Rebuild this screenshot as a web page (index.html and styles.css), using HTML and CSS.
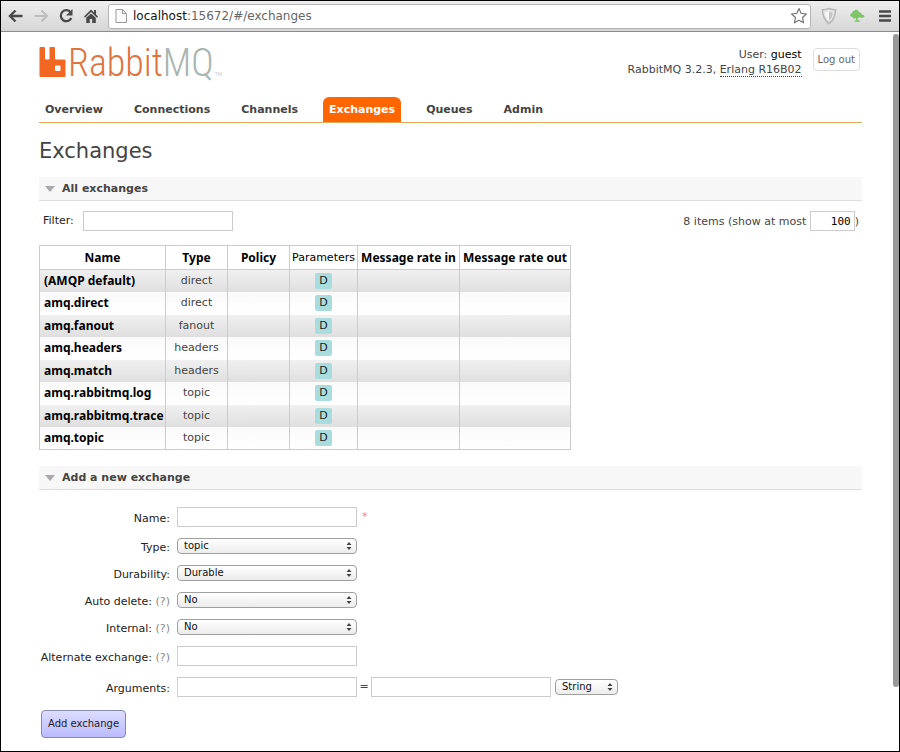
FILE: index.html
```html
<!DOCTYPE html>
<html lang="en">
<head>
<meta charset="utf-8">
<title>RabbitMQ Management</title>
<link rel="stylesheet" href="styles.css">
</head>
<body>
<div class="window">
  <div class="toolbar">
    <button class="tool" type="button" aria-label="Back"><svg width="16" height="16" viewBox="0 0 16 16"><path d="M7.500 2.500 2 8l5.500 5.500M2.500 8H14.500" fill="none" stroke="#4a4a4a" stroke-width="2.400"/></svg></button>
    <button class="tool" type="button" aria-label="Forward"><svg width="16" height="16" viewBox="0 0 16 16"><path d="M8.500 2.500 14 8l-5.500 5.500M13.500 8H1.500" fill="none" stroke="#bdbdbd" stroke-width="2"/></svg></button>
    <button class="tool" type="button" aria-label="Reload"><svg width="16" height="16" viewBox="0 0 16 16"><path d="M12.800 4.500A5.500 5.500 0 1 0 13.300 10" fill="none" stroke="#4a4a4a" stroke-width="2.300"/><path d="M14.500 1v6.500H8z" fill="#4a4a4a"/></svg></button>
    <button class="tool" type="button" aria-label="Home"><svg width="16" height="16" viewBox="0 0 16 16"><path d="M8 1.500 1 8.500l1 1.200 6-5.700 6 5.700 1-1.200-2-2V2h-2v2.500zM3.200 9.800V15h3.600v-4h2.400v4h3.600V9.800L8 5.500z" fill="#4a4a4a"/></svg></button>
    <div class="address">
      <svg width="12" height="14" viewBox="0 0 12 14"><path d="M1 .5h6.500l4 4v9H1zM7.500.5v4h4" fill="#fafafa" stroke="#999"/></svg>
      <span class="url"><span class="host">localhost</span>:15672/#/exchanges</span>
      <svg width="18" height="18" viewBox="0 0 18 18"><path d="m9 1.500 2.200 4.900 5.300.6-4 3.500 1.100 5.300L9 13.200l-4.600 2.600 1.100-5.300-4-3.500 5.300-.6z" fill="#fff" stroke="#777" stroke-width="1.200" stroke-linejoin="round"/></svg>
    </div>
    <svg class="ext" width="16" height="18" viewBox="0 0 16 18"><path d="M8 1.500C5.500 2.500 3.500 2.800 1.500 2.800c0 7 2 10.700 6.500 13.700 4.500-3 6.500-6.700 6.500-13.700-2 0-4-.3-6.500-1.300z" fill="#e6e6e6" stroke="#b8b8b8" stroke-width="1.600"/><path d="M8 4.500c-1.500.6-2.500.8-3.600.9.200 3.900 1.200 6.100 3.600 8z" fill="#fafafa"/><path d="M8 4.500c1.500.6 2.500.8 3.600.9-.2 3.900-1.200 6.100-3.600 8z" fill="#c4c4c4"/></svg>
    <svg class="ext" width="16" height="16" viewBox="0 0 16 16"><path d="M5.500 2.500 7 1.500l2 1 1.500 2 1.500.2.800 1.800 2 .7.700 1.500-1.500 1-2 .1-1.500-.6-1.800 1-.4 1.300 2.500 1.300.2 1H5l.5-1 1.700-.6-.5-2-2 .3L2.500 8.500l-1.500-.6.3-1.600L3 5l.7-1.600z" fill="#7fc466"/></svg>
    <button class="tool menu" type="button" aria-label="Menu"><svg width="14" height="14" viewBox="0 0 14 14"><path d="M1 2.500h12M1 7h12M1 11.500h12" stroke="#4a4a4a" stroke-width="2.600"/></svg></button>
  </div>

  <div class="page">
    <header class="masthead">
      <a class="logo" href="#/" aria-label="RabbitMQ">
        <svg width="27" height="30" viewBox="0 0 27 30"><path d="M1.500 0H5q1 0 1 1v10.500q0 1 1 1h2.500q1 0 1-1V1q0-1 1-1H15q1 0 1 1v10.500q0 1 1 1h8.500q1 0 1 1V29q0 1-1 1h-24Q.5 30 .5 29V1q0-1 1-1zM17 18.500q-1 0-1 1V23q0 1 1 1h3.500q1 0 1-1v-3.500q0-1-1-1z" fill="#f26722" fill-rule="evenodd"/></svg>
        <span class="wordmark">Rabbit<span class="mq">MQ</span></span><span class="tm">TM</span>
      </a>
      <div class="account">
        <div class="who">
          <div>User: <b class="user">guest</b></div>
          <div>RabbitMQ 3.2.3, <abbr class="erlang">Erlang R16B02</abbr></div>
        </div>
        <button class="logout" type="button">Log out</button>
      </div>
    </header>

    <nav class="tabs">
      <a href="#/">Overview</a>
      <a href="#/connections">Connections</a>
      <a href="#/channels">Channels</a>
      <a href="#/exchanges" class="selected">Exchanges</a>
      <a href="#/queues">Queues</a>
      <a href="#/users">Admin</a>
    </nav>

    <main>
      <h1>Exchanges</h1>

      <h2>All exchanges</h2>
      <div class="filter">
        <label for="filter">Filter:</label>
        <input id="filter" class="filter-box" type="text">
        <span class="count"><label for="most">8 items (show at most</label> <input id="most" class="most" type="text" value="100">)</span>
      </div>

      <table>
        <colgroup><col class="c-name"><col class="c-type"><col class="c-type"><col class="c-param"><col class="c-in"><col class="c-out"></colgroup>
        <thead><tr><th>Name</th><th>Type</th><th>Policy</th><th class="plain">Parameters</th><th>Message rate in</th><th>Message rate out</th></tr></thead>
        <tbody>
          <tr><td><a href="#/exchanges/default">(AMQP default)</a></td><td>direct</td><td></td><td><abbr>D</abbr></td><td></td><td></td></tr>
          <tr><td><a href="#/exchanges/direct">amq.direct</a></td><td>direct</td><td></td><td><abbr>D</abbr></td><td></td><td></td></tr>
          <tr><td><a href="#/exchanges/fanout">amq.fanout</a></td><td>fanout</td><td></td><td><abbr>D</abbr></td><td></td><td></td></tr>
          <tr><td><a href="#/exchanges/headers">amq.headers</a></td><td>headers</td><td></td><td><abbr>D</abbr></td><td></td><td></td></tr>
          <tr><td><a href="#/exchanges/match">amq.match</a></td><td>headers</td><td></td><td><abbr>D</abbr></td><td></td><td></td></tr>
          <tr><td><a href="#/exchanges/log">amq.rabbitmq.log</a></td><td>topic</td><td></td><td><abbr>D</abbr></td><td></td><td></td></tr>
          <tr><td><a href="#/exchanges/trace">amq.rabbitmq.trace</a></td><td>topic</td><td></td><td><abbr>D</abbr></td><td></td><td></td></tr>
          <tr><td><a href="#/exchanges/topic">amq.topic</a></td><td>topic</td><td></td><td><abbr>D</abbr></td><td></td><td></td></tr>
        </tbody>
      </table>

      <h2>Add a new exchange</h2>
      <form>
        <div class="fields">
          <label for="name">Name:</label>
          <div class="field"><input id="name" type="text"><span class="mand">*</span></div>
          <label for="type">Type:</label>
          <div class="field"><span class="pick"><select id="type"><option>topic</option></select><svg width="6" height="8" viewBox="0 0 6 8"><path d="M3 0l2.500 3h-5zM3 8l2.500-3h-5z" fill="#444"/></svg></span></div>
          <label for="durable">Durability:</label>
          <div class="field"><span class="pick"><select id="durable"><option>Durable</option></select><svg width="6" height="8" viewBox="0 0 6 8"><path d="M3 0l2.500 3h-5zM3 8l2.500-3h-5z" fill="#444"/></svg></span></div>
          <label for="auto">Auto delete: <span class="help">(?)</span></label>
          <div class="field"><span class="pick"><select id="auto"><option>No</option></select><svg width="6" height="8" viewBox="0 0 6 8"><path d="M3 0l2.500 3h-5zM3 8l2.500-3h-5z" fill="#444"/></svg></span></div>
          <label for="internal">Internal: <span class="help">(?)</span></label>
          <div class="field"><span class="pick"><select id="internal"><option>No</option></select><svg width="6" height="8" viewBox="0 0 6 8"><path d="M3 0l2.500 3h-5zM3 8l2.500-3h-5z" fill="#444"/></svg></span></div>
          <label for="alternate">Alternate exchange: <span class="help">(?)</span></label>
          <div class="field"><input id="alternate" type="text"></div>
          <label for="argkey">Arguments:</label>
          <div class="field"><input id="argkey" type="text"><span class="eq">=</span><input type="text" aria-label="Argument value"><span class="pick short"><select aria-label="Argument type"><option>String</option></select><svg width="6" height="8" viewBox="0 0 6 8"><path d="M3 0l2.500 3h-5zM3 8l2.500-3h-5z" fill="#444"/></svg></span></div>
        </div>
        <button class="submit" type="submit">Add exchange</button>
      </form>
    </main>
    <div class="scrollbar"></div>
  </div>
</div>
</body>
</html>
```
FILE: styles.css
```css
* { box-sizing: border-box; }

body {
  margin: 0;
  background: #fff;
  color: #444;
  font: 11px/16px Verdana, "DejaVu Sans", sans-serif;
}

.window {
  min-height: 100vh;
  border: 1px solid #000;
  display: flex;
  flex-direction: column;
}

/* Browser toolbar */
.toolbar {
  display: flex;
  align-items: center;
  height: 31px;
  padding: 0 7px;
  background: linear-gradient(#eee, #d6d6d6);
  border-bottom: 1px solid #8c8c8c;
}
.tool {
  display: flex;
  border: 0;
  padding: 0;
  margin-right: 9px;
  background: none;
}
.address {
  flex: 1;
  display: flex;
  align-items: center;
  height: 25px;
  padding: 0 2px 0 6px;
  background: #fff;
  border: 1px solid #b4b4b4;
  border-radius: 3px;
}
.url {
  flex: 1;
  margin-left: 6px;
  color: #666;
  font: 12px/16px "DejaVu Sans", sans-serif;
}
.host { color: #111; }
.ext { margin-left: 10px; }
.ext + .ext { margin-left: 12px; }
.menu { margin: 0 0 0 13px; }

/* Page */
.page {
  position: relative;
  flex: 1;
  padding: 15px 37px 8px 38px;
}
.scrollbar {
  position: absolute;
  top: 2px;
  right: 0;
  bottom: 64px;
  width: 6px;
  border-radius: 3px;
  background: #999;
}
a { color: inherit; text-decoration: none; }
abbr { text-decoration: none; }

.masthead { display: flex; justify-content: space-between; }
.logo { display: flex; align-items: flex-start; height: 50px; }
.wordmark {
  margin-left: 2px;
  color: #e07440;
  font: 300 38px/32px "Roboto Condensed", Lato, sans-serif;
}
.mq { color: #a9b5b0; }
.tm {
  align-self: flex-start;
  margin: 24px 0 0 1px;
  color: #c4cbc8;
  font-size: 5px;
  line-height: 6px;
}
.account { display: flex; gap: 11px; align-items: flex-start; }
.who { text-align: right; line-height: 15px; }
.user { color: #000; font-weight: normal; }
.erlang { border-bottom: 1px dotted #444; }
.logout {
  height: 23px;
  margin: 1px 2px 0 0;
  padding: 0 4px;
  border: 1px solid #ddd;
  border-radius: 4px;
  background: #fff;
  color: #666;
  font: 10px/14px Verdana, "DejaVu Sans", sans-serif;
}

.tabs {
  display: flex;
  gap: 19px;
  border-bottom: 1px solid #e0a95c;
}
.tabs a {
  height: 25px;
  padding: 0 6px;
  border-radius: 6px 6px 0 0;
  font-weight: bold;
  line-height: 26px;
}
.tabs .selected { background: #f60; color: #fff; }

h1 {
  margin: 13px 0 11px;
  font-size: 21px;
  font-weight: normal;
  line-height: 30px;
}
h2 {
  display: flex;
  align-items: center;
  gap: 7px;
  margin: 0;
  padding-left: 6px;
  border-bottom: 1px solid #ddd;
  background: #f7f7f7;
  font-size: 11px;
  line-height: 23px;
}
h2::before {
  content: "";
  border: 5px solid transparent;
  border-top: 6px solid #aaa;
  border-bottom: 0;
}

input {
  width: 180px;
  height: 20px;
  border: 1px solid #ccc;
  background: #fff;
  font: 11px/16px "DejaVu Sans Mono", monospace;
}
.filter {
  display: flex;
  align-items: center;
  gap: 9px;
  padding: 10px 3px 14px 4px;
}
.filter label { color: #222; }
.filter .filter-box { width: 150px; }
.count { margin-left: auto; }
.filter .count label { color: #444; }
.most { width: 45px; padding: 0 3px; text-align: right; }

table { border-collapse: collapse; margin-bottom: 16px; }
th, td { border: 1px solid #ccc; padding: 0 2px; }
th {
  height: 24px;
  color: #000;
  font: bold 12px/16px "Noto Sans", sans-serif;
  white-space: nowrap;
}
th.plain { font: 11px/16px Verdana, "DejaVu Sans", sans-serif; }
td { height: 22px; border-top: 0; border-bottom: 0; text-align: center; }
tr:nth-child(even) td { height: 23px; }
td:first-child {
  padding: 0 0 0 4px;
  color: #000;
  font: bold 12px/16px "Noto Sans", sans-serif;
  text-align: left;
}
tbody { border-bottom: 1px solid #ccc; }
tbody tr { background: linear-gradient(#fafafa, #fff); }
tbody tr:nth-child(odd) { background: linear-gradient(#f0f0f0, #dfdfdf); }
td abbr {
  display: inline-block;
  padding: 0 4px;
  border-radius: 2px;
  background: #a9dcdc;
  color: #222;
}
.c-name { width: 126px; }
.c-type { width: 62px; }
.c-param { width: 68px; }
.c-in { width: 102px; }
.c-out { width: 111px; }

.fields {
  display: grid;
  grid-template-columns: 131px 1fr;
  gap: 11px 7px;
  align-items: center;
  margin-top: 17px;
}
.fields label {
  height: 16px;
  padding-top: 2px;
  color: #222;
  line-height: 16px;
  text-align: right;
  white-space: nowrap;
}
.help { color: #888; }
.field { display: flex; align-items: center; }
.mand { margin-left: 5px; color: #e88; }
.eq { width: 14px; text-align: center; }
.pick { position: relative; display: flex; width: 180px; }
.pick svg { position: absolute; right: 5px; top: 4px; pointer-events: none; }
.short { width: 63px; margin-left: 4px; }
select {
  appearance: none;
  width: 100%;
  height: 16px;
  padding: 0 16px 0 6px;
  border: 1px solid #a0a0a0;
  border-radius: 4px;
  background: linear-gradient(#fff, #ececec);
  color: #111;
  font: 10px/14px "DejaVu Sans", sans-serif;
}
.submit {
  height: 28px;
  margin: 13px 0 0 2px;
  padding: 0 6px;
  border: 1px solid #88a;
  border-radius: 4px;
  background: linear-gradient(#ddf, #bbf);
  color: #222;
  font: 10px/14px Verdana, "DejaVu Sans", sans-serif;
}
```
